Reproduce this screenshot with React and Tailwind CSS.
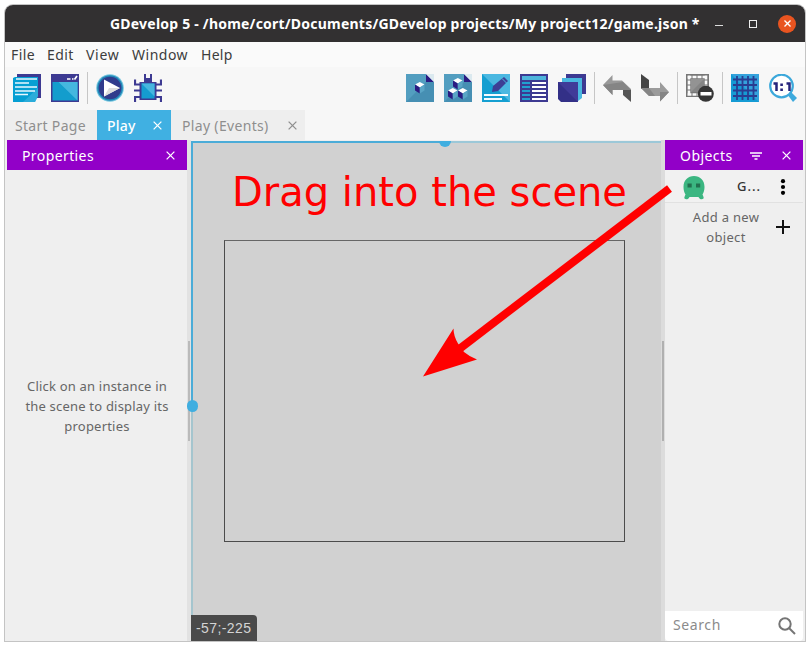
import React from "react";

function Icon({ children }) {
  return (
    <svg className="h-7 w-7 shrink-0" viewBox="0 0 28 28">
      {children}
    </svg>
  );
}

function Divider() {
  return <div className="-mx-0.5 h-8 w-px shrink-0 bg-[#c6c6c6]" />;
}

function Cross({ size = "h-[9px] w-[9px]", width = 1.4 }) {
  return (
    <svg className={size + " shrink-0"} viewBox="0 0 10 10" fill="none" stroke="currentColor" strokeWidth={width}>
      <path d="M.7 .7l8.6 8.6M9.3 .7L.7 9.3" />
    </svg>
  );
}

function Cube({ x, y }) {
  return (
    <g transform={`translate(${x} ${y})`}>
      <path d="M0 2.600L4.800 0l4.700 2.600-4.700 3z" fill="#fff" />
      <path d="M0 2.600L4.800 5.600v6L0 8.600z" fill="#2b1b82" />
      <path d="M9.500 2.600L4.800 5.600v6l4.700-3z" fill="#5aa5c6" />
    </g>
  );
}

function SheetBase() {
  return (
    <>
      <path d="M0 0h20l8 8v20H0z" fill="#539ec0" />
      <path d="M0 28L20 8h8v20z" fill="#468fb3" />
      <path d="M20 0v8h8z" fill="#2b1b82" />
      <path d="M20 0h8v8z" fill="#dbe9ef" />
    </>
  );
}

function ProjectIcon() {
  return (
    <Icon>
      <path d="M4 0h24v24h-4V4H4z" fill="#3d3a92" />
      <path d="M2 3h23v19l-3 6H0V4z" fill="#069fd3" />
      <path d="M25 14v8l-3 6H10z" fill="#43b6df" opacity=".6" />
      <path d="M3 5h21M2 9h14M2 13h22M2 17h20M2 20.500h13" stroke="#e9f8ff" strokeWidth="1.500" />
    </Icon>
  );
}

function WindowIcon() {
  return (
    <Icon>
      <path d="M0 0h28v28H0z" fill="#3d3a92" />
      <path d="M1.500 8h25v18.500h-25z" fill="#139dcd" />
      <path d="M1.500 8h6l19 18.500V8z" fill="#45b7df" />
      <path d="M16 5h3.500M21 5h1.500M23.500 5.500l2.500-3.500" stroke="#fff" strokeWidth="1.700" />
    </Icon>
  );
}

function PlayIcon() {
  return (
    <Icon>
      <circle cx="14" cy="14" r="13.800" fill="#72c5df" />
      <circle cx="14" cy="14" r="12.800" fill="#2185b6" />
      <circle cx="14" cy="14" r="11.300" fill="#303b8c" />
      <path d="M8 5.500v17L24 14z" fill="#fff" />
      <path d="M8 22.500L13 14h11z" fill="#ddd" />
    </Icon>
  );
}

function DebugIcon() {
  return (
    <Icon>
      <path d="M1 5.500v5h6M27 5.500v5h-6M0 16.500h7M28 16.500h-7M1 28v-5h6M27 28v-5h-6" fill="none" stroke="#3d3a92" strokeWidth="2.200" />
      <path d="M10 0h2v4h4V0h2v8h-8zM5.500 8h17v18h-17z" fill="#3d3a92" />
      <path d="M7.500 9.500h13v15h-13z" fill="#159cd0" />
      <path d="M7.500 9.500l13 13v-13z" fill="#47b6df" />
    </Icon>
  );
}

function ObjectIcon() {
  return (
    <Icon>
      <SheetBase />
      <Cube x={9} y={8} />
    </Icon>
  );
}

function GroupIcon() {
  return (
    <Icon>
      <SheetBase />
      <Cube x={9} y={4} />
      <Cube x={4} y={14} />
      <Cube x={14} y={14} />
    </Icon>
  );
}

function EditIcon() {
  return (
    <Icon>
      <path d="M0 0h28v28H0z" fill="#159fd1" />
      <path d="M0 0h28v28z" fill="#4bb8e1" />
      <path d="M10 18l1-6L22 3l4 4-10 10z" fill="#3d3f95" />
      <path d="M20 4.500l4.500 4.500" stroke="#4bb8e1" strokeWidth="1" />
      <path d="M2 21h24M2 25h18" stroke="#f3fbff" strokeWidth="2.200" />
    </Icon>
  );
}

function ListIcon() {
  return (
    <Icon>
      <path d="M0 0h28v28H0z" fill="#3d3a92" />
      <path d="M2 2h24v4H2z" fill="#4db4dc" />
      <path d="M2 9h8M2 13h8M2 17h8M2 21h8M2 25h8" stroke="#209fd0" strokeWidth="2.200" />
      <path d="M12 9h14M12 13h14M12 17h14M12 21h14M12 25h14" stroke="#fff" strokeWidth="2.200" />
    </Icon>
  );
}

function LayersIcon() {
  return (
    <Icon>
      <path d="M8 0h20v20H8z" fill="#3d3a92" />
      <path d="M4 4h20v20l-4 3L4 9z" fill="#4ab8e0" />
      <path d="M0 8h20v20H3l-3-3z" fill="#333087" />
      <path d="M0 8l20 20V8z" fill="#403b98" />
    </Icon>
  );
}

function UndoIcon() {
  return (
    <Icon>
      <path d="M20 15h8v13l-8-7z" fill="#555" />
      <path d="M0 11L9.500 1v5.500H19l9 8.500v1H9.500v5z" fill="#999" />
      <path d="M0 11l9.500 10v-5H28l-8-8z" fill="#858585" />
    </Icon>
  );
}

function RedoIcon() {
  return (
    <Icon>
      <path d="M0 0l8 6v9H0z" fill="#444" />
      <path d="M0 14h19V8l9 10-9 9.500V22H8z" fill="#9b9b9b" />
      <path d="M0 14h8l6 8H8zM19 27.500V18h9z" fill="#858585" />
    </Icon>
  );
}

function MaskIcon() {
  return (
    <Icon>
      <path d="M0 0h23v23H0z" fill="#777" />
      <path d="M1.500 3h20M1.500 20.500h20M3 1.500v20M20 1.500v20" stroke="#fafafa" strokeWidth="2.600" strokeDasharray="4 1" />
      <path d="M5 5h13v13H5z" fill="#939393" />
      <path d="M5 18L18 5v13z" fill="#858585" />
      <circle cx="19.800" cy="19.800" r="8" fill="#363636" />
      <path d="M14.500 18h11v3.500h-11z" fill="#fff" />
    </Icon>
  );
}

function GridIcon() {
  return (
    <Icon>
      <path d="M0 0h28v28H0z" fill="#159bd4" />
      <path d="M0 0h28v28z" fill="#35a2dc" />
      <path d="M2 5.500h24M2 11h24M2 16.500h24M2 22h24M6 2v24M11.500 2v24M17 2v24M22.500 2v24" stroke="#293d91" strokeWidth="1.800" />
    </Icon>
  );
}

function ZoomIcon() {
  return (
    <Icon>
      <path d="M18 20l3-3 7 7-4 4z" fill="#3eaadd" />
      <circle cx="12.500" cy="12" r="11.300" fill="#fff" stroke="#3ca8db" strokeWidth="2.200" />
      <path d="M4.500 9.500h3V17M17.500 9.500h3V17" fill="none" stroke="#26247b" strokeWidth="2.500" />
      <path d="M11.300 9.500h2.600v2.500h-2.600zM11.300 14.500h2.600V17h-2.600z" fill="#26247b" />
    </Icon>
  );
}

function TitleBar() {
  return (
    <header className="flex h-[37px] shrink-0 items-center rounded-t-lg bg-[#323031] pl-[105px] pr-[9px] text-white">
      <h1 className="w-[590px] whitespace-nowrap text-[14px] font-bold leading-5 tracking-[0.22px]">
        GDevelop 5 - /home/cort/Documents/GDevelop projects/My project12/game.json *
      </h1>
      <div className="ml-auto flex items-center">
        <div className="mt-[3px] h-px w-2 bg-[#ddd]" />
        <div className="ml-[26px] h-2 w-2 border border-[#eee]" />
        <div className="ml-[21px] flex h-[18px] w-[18px] items-center justify-center rounded-full bg-[#e95420]">
          <Cross size="h-[7px] w-[7px]" width={1.9} />
        </div>
      </div>
    </header>
  );
}

function MenuBar() {
  return (
    <nav className="flex h-[25px] shrink-0 items-center whitespace-nowrap bg-[#fafafa] pl-1.5 text-[14px] text-[#3d3d3d]">
      <span className="w-9 tracking-[0.4px]">File</span>
      <span className="w-[39px] tracking-[0.4px]">Edit</span>
      <span className="w-[46px] tracking-[0.7px]">View</span>
      <span className="w-[69px] tracking-[0.5px]">Window</span>
      <span className="tracking-[0.3px]">Help</span>
    </nav>
  );
}

function Toolbar() {
  return (
    <div className="flex h-[43px] shrink-0 items-center justify-between bg-[#f7f7f7] px-2 pb-px">
      <div className="flex items-center gap-2.5">
        <ProjectIcon />
        <WindowIcon />
        <Divider />
        <PlayIcon />
        <DebugIcon />
      </div>
      <div className="flex items-center gap-2.5">
        <ObjectIcon />
        <GroupIcon />
        <EditIcon />
        <ListIcon />
        <LayersIcon />
        <Divider />
        <UndoIcon />
        <RedoIcon />
        <Divider />
        <MaskIcon />
        <Divider />
        <GridIcon />
        <ZoomIcon />
      </div>
    </div>
  );
}

function Tabs() {
  return (
    <div className="flex h-[30px] shrink-0 whitespace-nowrap bg-[#f7f7f7] text-[14px] text-[#8e8e8e]">
      <div className="flex w-[92px] items-center bg-[#eee] pl-[10px] tracking-[0.3px]">Start Page</div>
      <div className="flex w-[74px] items-center justify-between bg-[#40b0e2] pl-[10px] pr-[9px] text-white">
        <span className="font-medium tracking-[0.2px]">Play</span>
        <Cross />
      </div>
      <div className="flex w-[134px] items-center justify-between bg-[#eee] pl-[11px] pr-2">
        <span className="tracking-[0.33px]">Play (Events)</span>
        <Cross />
      </div>
    </div>
  );
}

function PropertiesPanel() {
  return (
    <section className="flex w-[180px] shrink-0 flex-col">
      <div className="flex h-[30px] shrink-0 items-center justify-between bg-[#9200c8] pl-[15px] pr-3 text-[14px] text-white">
        <span className="tracking-[0.4px]">Properties</span>
        <Cross />
      </div>
      <p className="mt-[206px] text-center text-[13px] leading-5 tracking-[0.2px] text-[#666]">
        Click on an instance in
        <br />
        the scene to display its
        <br />
        properties
      </p>
    </section>
  );
}

function Scene() {
  return (
    <main className="relative h-full w-[470px] shrink-0 bg-[#d1d1d1]">
      <div className="absolute left-0 top-0 h-0.5 w-full bg-[#9cc8d8]" />
      <div className="absolute left-0 top-0 h-full w-0.5 bg-[#a5c5ce]" />
      <div className="absolute left-0 top-0 h-0.5 w-[254px] bg-[#4bacd8]" />
      <div className="absolute left-0 top-0 h-[265px] w-0.5 bg-[#4bacd8]" />
      <div className="absolute left-[248px] top-0 h-[6px] w-3 rounded-b-full bg-[#40aee0]" />
      <div className="absolute left-[-4px] top-[259px] h-3 w-[11px] rounded-full bg-[#40aee0]" />
      <div className="absolute left-[33px] top-[99px] h-[302px] w-[401px] border border-[#4c4c4c] border-t-[#666]" />
      <div className="absolute left-[41px] top-[26px] whitespace-nowrap text-[40px] leading-[50px] text-[#ff0000] font-['DejaVu_Sans',sans-serif]">
        Drag into the scene
      </div>
      <div className="absolute bottom-0 left-0 flex h-[26px] w-[66px] items-center rounded-tr bg-[#4a4a4a] pl-[5px] text-[14px] tracking-[0.4px] text-[#d4d4d4] font-['Liberation_Sans',sans-serif]">
        -57;-225
      </div>
      <svg className="absolute left-[229px] top-[40px] z-10 h-[202px] w-[256px]" viewBox="420 181 256 202">
        <path d="M669.500 188.500L458 350" stroke="#f00" strokeWidth="8" />
        <path d="M423 376.500L453.500 328.500Q453.500 336 458 343.500L464 352Q470 357 477 359.500Z" fill="#f00" />
      </svg>
    </main>
  );
}

function Ghost() {
  return (
    <svg className="mt-[3px] h-6 w-[22px] shrink-0" viewBox="0 0 22 24">
      <path d="M.5 11C.5 4 5 0 11 0s10.500 4 10.500 11c0 3-.8 5.500-2 7.500.8 2 1.500 3 1 4-1.500 1.500-4 .8-5-1.500H6.500c-1 2.300-3.500 3-5 1.500-.5-1 .2-2 1-4C1.300 16.500.5 14 .5 11z" fill="#3bb681" />
      <path d="M4.500 7.500h4.200v4H4.500zM13 7.500h4.200v4H13z" fill="#22704f" />
    </svg>
  );
}

function ObjectsPanel() {
  return (
    <section className="flex w-[138px] shrink-0 flex-col text-[#666]">
      <div className="flex h-[30px] shrink-0 items-center bg-[#9200c8] pl-[15px] pr-3 text-[14px] text-white">
        <span className="tracking-[0.45px]">Objects</span>
        <svg className="ml-auto mr-5 mt-0.5 h-2 w-3" viewBox="0 0 12 8" stroke="currentColor" strokeWidth="1.300">
          <path d="M0 1h12M2 4h8M4.500 7h3" />
        </svg>
        <Cross />
      </div>
      <div className="flex h-[33px] shrink-0 items-center border-b border-[#e1e1e1] bg-[#f1f1f1] pl-[18px]">
        <Ghost />
        <span className="ml-8 mt-0.5 w-6 text-[13px] font-medium tracking-[1px] text-[#333]">G...</span>
        <svg className="ml-[19px] mt-0.5 h-4 w-[6px]" viewBox="0 0 6 16">
          <circle cx="3" cy="2.200" r="2.100" />
          <circle cx="3" cy="8" r="2.100" />
          <circle cx="3" cy="13.800" r="2.100" />
        </svg>
      </div>
      <div className="flex items-center pl-[21px] pt-1">
        <p className="w-20 whitespace-nowrap text-center text-[13px] leading-5 tracking-[0.3px]">
          Add a new
          <br />
          object
        </p>
        <svg className="ml-[10px] h-[14px] w-[14px]" viewBox="0 0 14 14" stroke="#111" strokeWidth="2">
          <path d="M0 7h14M7 0v14" />
        </svg>
      </div>
      <div className="mt-auto flex h-[30px] shrink-0 items-center justify-between rounded-b bg-white pl-2 pr-[7px] text-[14px] text-[#8b8b8b]">
        <span className="mb-1 tracking-[0.6px]">Search</span>
        <svg className="h-[18px] w-[18px]" viewBox="0 0 18 18" fill="none" stroke="#757575" strokeWidth="2">
          <circle cx="7" cy="7" r="5.700" />
          <path d="M11 11l6 6" />
        </svg>
      </div>
    </section>
  );
}

export default function App() {
  return (
    <div className="h-[647px] w-[809px] overflow-hidden bg-white pl-[5px] pt-[5px] font-['Noto_Sans',sans-serif]">
      <div className="flex h-[636px] w-[800px] flex-col rounded-t-lg shadow-[0_0_0_1px_#c4c4c4]">
        <TitleBar />
        <MenuBar />
        <Toolbar />
        <Tabs />
        <div className="flex min-h-0 flex-1 bg-[#efefef] pl-0.5">
          <PropertiesPanel />
          <div className="flex w-1 shrink-0 items-center bg-[#e2e2e2] pl-px">
            <div className="h-[100px] w-0.5 bg-[#bababa]" />
          </div>
          <div className="flex shrink-0 pt-px">
            <Scene />
          </div>
          <div className="flex w-1 shrink-0 items-center bg-[#dcdcdc] pl-px">
            <div className="h-[100px] w-0.5 bg-[#b0b0b0]" />
          </div>
          <ObjectsPanel />
        </div>
      </div>
    </div>
  );
}
